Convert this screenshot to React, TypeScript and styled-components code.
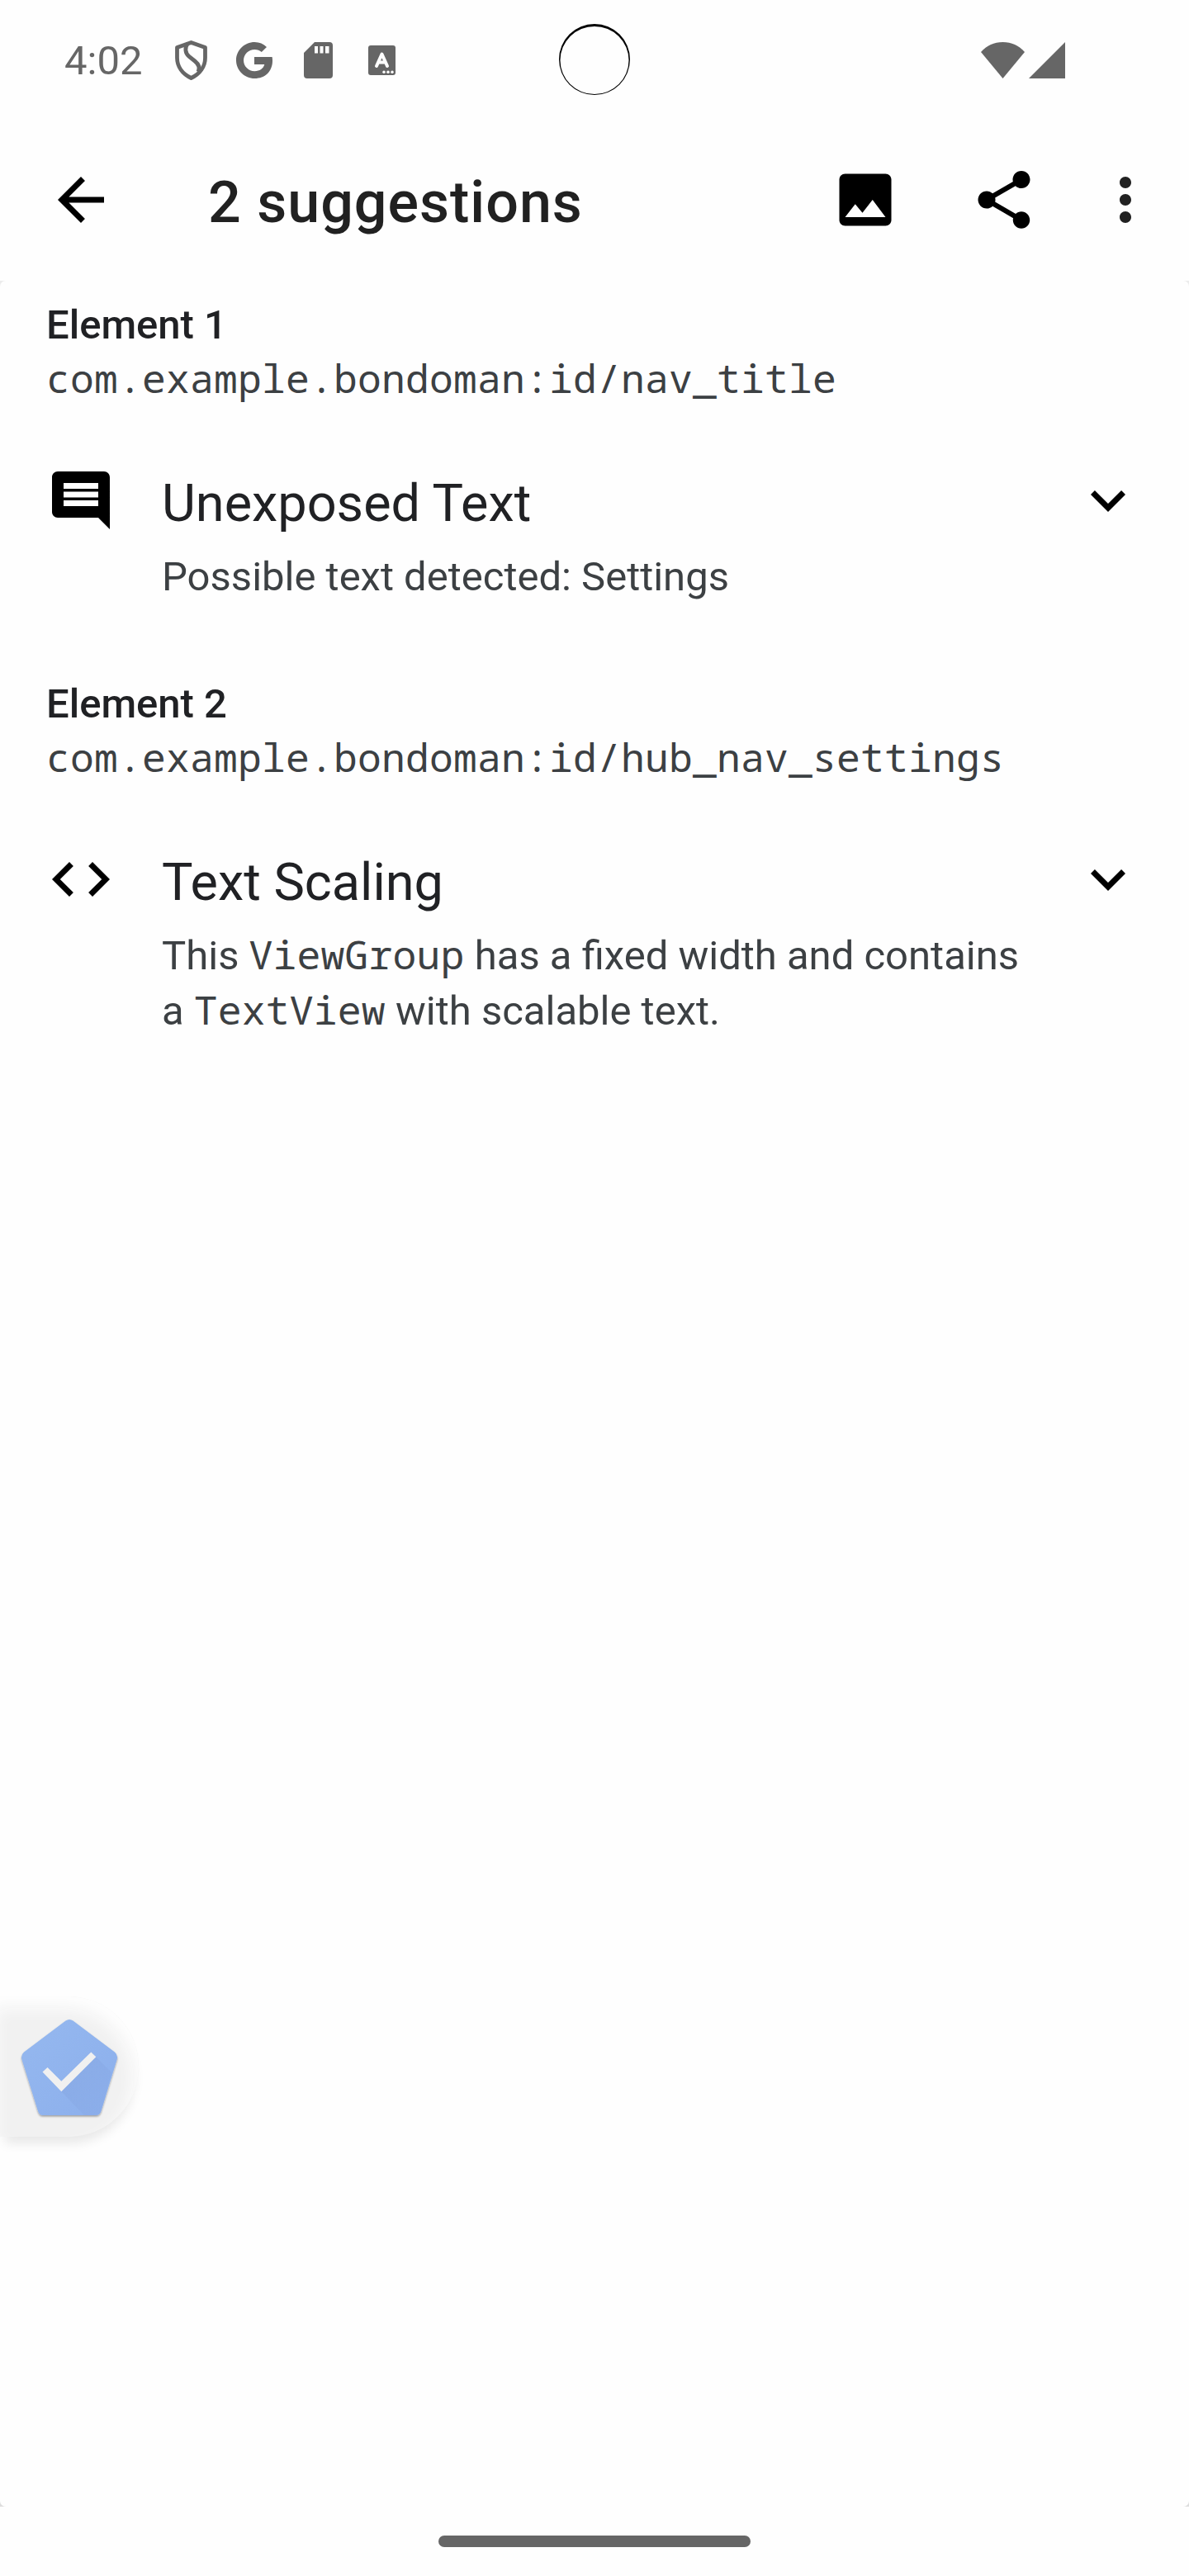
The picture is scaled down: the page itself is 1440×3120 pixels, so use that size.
import React from "react";
import styled, { createGlobalStyle } from "styled-components";

const Global = createGlobalStyle`
  html, body { margin: 0; padding: 0; background: #fefefe; }
  * { box-sizing: border-box; }
`;

const Screen = styled.main`
  position: relative;
  display: flex;
  flex-direction: column;
  width: 1440px;
  height: 3120px;
  overflow: hidden;
  background: #fefefe;
  font-family: Roboto, "Liberation Sans", sans-serif;
  color: #202124;
`;

const StatusBar = styled.header`
  position: relative;
  display: flex;
  align-items: center;
  justify-content: space-between;
  height: 146px;
  padding: 0 150px 0 78px;
  color: #666666;
`;

const StatusGroup = styled.div`
  display: flex;
  align-items: center;
`;

const Clock = styled.span`
  width: 134px;
  padding-top: 2px;
  font-size: 49px;
  line-height: 58px;
`;

const StatusIcon = styled.svg<{ $w: number; $h: number; $gap?: number }>`
  display: block;
  flex: none;
  width: ${(p) => p.$w}px;
  height: ${(p) => p.$h}px;
  margin-left: ${(p) => p.$gap ?? 0}px;
  fill: currentColor;
`;

const Camera = styled.svg`
  position: absolute;
  left: 677px;
  top: 29px;
  width: 86px;
  height: 86px;
`;

const AppBar = styled.nav`
  display: flex;
  align-items: center;
  height: 192px;
  margin-bottom: 2px;
  padding: 0 35px 0 56px;
`;

const Icon = styled.svg<{ $color?: string }>`
  display: block;
  flex: none;
  width: 84px;
  height: 84px;
  fill: ${(p) => p.$color ?? "#000"};
`;

const IconButton = styled.button<{ $gap?: number }>`
  display: block;
  flex: none;
  padding: 0;
  border: 0;
  background: none;
  margin-left: ${(p) => p.$gap ?? 0}px;
`;

const Title = styled.h1`
  flex: 1;
  margin: 6px 0 0 112px;
  font-size: 70px;
  font-weight: 500;
  letter-spacing: 1px;
  line-height: 82px;
  color: #212121;
`;

const Backdrop = styled.div`
  height: 2696px;
  background: linear-gradient(#ececec, #dddddd);
`;

const Sheet = styled.div`
  height: 100%;
  padding-top: 21px;
  border-radius: 7px;
  background: #fefefe;
`;

const Group = styled.section`
  height: 459px;
  padding: 0 56px;
`;

const GroupTitle = styled.h2`
  margin: 0;
  font-size: 49px;
  font-weight: 500;
  line-height: 65px;
`;

const mono = `"Droid Sans Mono", "Noto Sans Mono", "DejaVu Sans Mono", monospace`;

const ResourceId = styled.div`
  font-family: ${mono};
  font-size: 48px;
  letter-spacing: 0.2px;
  line-height: 63px;
  color: #3c4043;
`;

const Row = styled.div`
  display: flex;
  align-items: flex-start;
  padding-top: 75px;
`;

const RowText = styled.div`
  flex: 1;
  padding: 9px 40px 0 56px;
`;

const RowTitle = styled.h3`
  margin: 0 0 18px;
  font-size: 63px;
  font-weight: 400;
  line-height: 74px;
`;

const Description = styled.p`
  margin: 0;
  font-size: 49px;
  line-height: 67px;
  color: #3c4043;
  white-space: nowrap;
`;

const Code = styled.code`
  font-family: ${mono};
  font-size: 48px;
  letter-spacing: 0.2px;
  line-height: 1;
`;

const Bubble = styled.button`
  position: absolute;
  left: 0;
  top: 2418px;
  display: flex;
  width: 168px;
  height: 170px;
  padding: 24px 0 0 22px;
  border: 0;
  border-radius: 0 85px 85px 0;
  background: #f1f1f1;
  box-shadow: inset -6px 14px 20px #fefefe, 0 14px 14px -6px rgba(0, 0, 0, 0.09);
`;

const Logo = styled.svg`
  width: 124px;
  height: 130px;
`;

const NavBar = styled.footer`
  display: flex;
  justify-content: center;
  height: 84px;
  padding-top: 35px;
`;

const HomeHandle = styled.div`
  width: 378px;
  height: 14px;
  border-radius: 7px;
  background: #666666;
`;

const COMMENT =
  "M21.99 4c0-1.1-.89-2-1.99-2H4c-1.1 0-2 .9-2 2v12c0 1.1.9 2 2 2h14l4 4-.01-18zM18 14H6v-2h12v2zm0-3H6V9h12v2zm0-3H6V6h12v2z";
const CODE =
  "M9.4 16.6L4.8 12l4.6-4.6L8 6l-6 6 6 6 1.4-1.4zm5.2 0l4.6-4.6-4.6-4.6L16 6l6 6-6 6-1.4-1.4z";

const items = [
  {
    label: "Element 1",
    id: "com.example.bondoman:id/nav_title",
    icon: COMMENT,
    title: "Unexposed Text",
    body: <>Possible text detected: Settings</>,
  },
  {
    label: "Element 2",
    id: "com.example.bondoman:id/hub_nav_settings",
    icon: CODE,
    title: "Text Scaling",
    body: (
      <>
        This <Code>ViewGroup</Code> has a fixed width and contains
        <br />a <Code>TextView</Code> with scalable text.
      </>
    ),
  },
];

export default function App() {
  return (
    <Screen>
      <Global />
      <StatusBar>
        <StatusGroup>
          <Clock>4:02</Clock>
          <StatusIcon $w={39} $h={48} viewBox="0 0 39 48">
            <path
              d="M19.5 2.5L36.5 8.500V21C36.500 31.500 30 40.500 19.500 45.500C9 40.500 2.500 31.500 2.500 21V8.500Z"
              fill="none"
              stroke="currentColor"
              strokeWidth="4.800"
              strokeLinejoin="round"
            />
            <path
              d="M15.500 3.500C11.500 8.500 12 15 17 19.500L24 25C29 29 30.500 33 28 38"
              fill="none"
              stroke="currentColor"
              strokeWidth="4.800"
            />
          </StatusIcon>
          <StatusIcon $w={44} $h={44} $gap={35} viewBox="0 0 44 44">
            <path d="M22 18V27H34.300C33 32 28.500 35.200 22.400 35.200C15 35.200 9 29.300 9 22C9 14.700 15 8.900 22.400 8.900C25.700 8.900 28.600 10 30.800 12L37 5.900C33.200 2.200 28.200 0 22.400 0C10 0 0 9.800 0 22C0 34.200 10 44 22.400 44C35 44 44 35.500 44 22.500C44 21 43.900 19.500 43.600 18Z" />
          </StatusIcon>
          <StatusIcon $w={35} $h={44} $gap={38} viewBox="0 0 35 44">
            <path
              fillRule="evenodd"
              d="M13 0H31a4 4 0 0 1 4 4V40a4 4 0 0 1-4 4H4a4 4 0 0 1-4-4V13ZM13 5V13.500H17V5ZM19.500 5V13.500H23.500V5ZM26 5V13.500H30.500V5Z"
            />
          </StatusIcon>
          <StatusIcon $w={33} $h={36} $gap={43} viewBox="0 0 33 36">
            <rect width="33" height="36" rx="3" />
            <path
              d="M10 25L16.500 10.500L23 25M13 20.500H20"
              fill="none"
              stroke="#fefefe"
              strokeWidth="4"
              strokeLinecap="round"
              strokeLinejoin="round"
            />
            <g fill="#fefefe">
              <circle cx="19" cy="32.200" r="1.700" />
              <circle cx="24" cy="32.200" r="1.700" />
              <circle cx="29" cy="32.200" r="1.700" />
            </g>
          </StatusIcon>
        </StatusGroup>
        <Camera viewBox="0 0 86 86">
          <path
            fillRule="evenodd"
            d="M43 0a43 43 0 1 1 0 86a43 43 0 1 1 0-86ZM43 3a41.500 41 0 1 0 0 82a41.500 41 0 1 0 0-82Z"
          />
        </Camera>
        <StatusGroup>
          <StatusIcon $w={53} $h={44} viewBox="0 0 53 44">
            <path d="M0 12C7 4 16 0 26.500 0S46 4 53 12L26.500 44Z" />
          </StatusIcon>
          <StatusIcon $w={44} $h={44} $gap={5} viewBox="0 0 44 44">
            <path d="M44 0V44H0Z" />
          </StatusIcon>
        </StatusGroup>
      </StatusBar>

      <AppBar>
        <IconButton aria-label="Back">
          <Icon viewBox="0 0 24 24">
            <path d="M20 11H7.830l5.590-5.590L12 4l-8 8 8 8 1.410-1.410L7.830 13H20v-2z" />
          </Icon>
        </IconButton>
        <Title>2 suggestions</Title>
        <IconButton aria-label="Screenshot">
          <Icon viewBox="0 0 24 24">
            <path d="M21 19V5c0-1.100-.9-2-2-2H5c-1.100 0-2 .9-2 2v14c0 1.100.9 2 2 2h14c1.100 0 2-.9 2-2zM8.500 13.500l2.500 3.010L14.500 12l4.500 6H5l3.500-4.500z" />
          </Icon>
        </IconButton>
        <IconButton $gap={84} aria-label="Share">
          <Icon viewBox="0 0 24 24">
            <path d="M18 16.080c-.76 0-1.440.3-1.960.77L8.910 12.700c.05-.23.09-.46.09-.7s-.04-.47-.09-.7l7.050-4.110c.54.5 1.250.81 2.040.81 1.660 0 3-1.340 3-3s-1.340-3-3-3-3 1.340-3 3c0 .24.04.47.09.7L8.040 9.810C7.500 9.310 6.790 9 6 9c-1.660 0-3 1.340-3 3s1.340 3 3 3c.79 0 1.500-.31 2.040-.81l7.120 4.160c-.05.21-.08.43-.08.65 0 1.610 1.310 2.920 2.920 2.920s2.920-1.310 2.920-2.920-1.310-2.920-2.920-2.920z" />
          </Icon>
        </IconButton>
        <IconButton $gap={63} aria-label="More options">
          <Icon $color="#212121" viewBox="0 0 24 24">
            <path d="M12 8c1.100 0 2-.9 2-2s-.9-2-2-2-2 .9-2 2 .9 2 2 2zm0 2c-1.100 0-2 .9-2 2s.9 2 2 2 2-.9 2-2-.9-2-2-2zm0 6c-1.100 0-2 .9-2 2s.9 2 2 2 2-.9 2-2-.9-2-2-2z" />
          </Icon>
        </IconButton>
      </AppBar>

      <Backdrop>
        <Sheet>
          {items.map((item) => (
            <Group key={item.id}>
              <GroupTitle>{item.label}</GroupTitle>
              <ResourceId>{item.id}</ResourceId>
              <Row>
                <Icon viewBox="0 0 24 24">
                  <path d={item.icon} />
                </Icon>
                <RowText>
                  <RowTitle>{item.title}</RowTitle>
                  <Description>{item.body}</Description>
                </RowText>
                <Icon viewBox="0 0 24 24">
                  <path d="M16.590 8.590L12 13.170 7.410 8.590 6 10l6 6 6-6z" />
                </Icon>
              </Row>
            </Group>
          ))}
        </Sheet>
      </Backdrop>

      <Bubble aria-label="Check screen">
        <Logo viewBox="22 42 124 130">
          <defs>
            <linearGradient id="face" x1="0" y1="0" x2="1" y2="1">
              <stop offset="0" stopColor="#95b8ef" />
              <stop offset="1" stopColor="#8cafec" />
            </linearGradient>
            <linearGradient id="cast" x1="0" y1="0" x2="1" y2="1">
              <stop offset="0" stopColor="#5a70b0" stopOpacity=".13" />
              <stop offset="1" stopColor="#5a70b0" stopOpacity=".02" />
            </linearGradient>
            <filter id="drop" x="-10%" y="-10%" width="120%" height="120%">
              <feDropShadow dx="0" dy="1.500" stdDeviation="1.200" floodOpacity=".35" />
            </filter>
          </defs>
          <path
            d="M79.500 47.500Q84 44.500 88.500 47.500L139 85.500Q143 89 141.800 94L122.500 157Q121 162 116 162H52Q47.500 162 46 157L26.300 94Q25 89 29 85.500Z"
            fill="url(#face)"
            filter="url(#drop)"
          />
          <path d="M116.300 91.300L135 110L122.500 157Q121 162 116 162H102L74.300 133.300Z" fill="url(#cast)" />
          <path d="M51.500 109.500L57.500 104L74.300 120.700L110.300 85.500L116.300 91.300L74.300 133.300Z" fill="#f0f0f0" />
        </Logo>
      </Bubble>

      <NavBar>
        <HomeHandle />
      </NavBar>
    </Screen>
  );
}
